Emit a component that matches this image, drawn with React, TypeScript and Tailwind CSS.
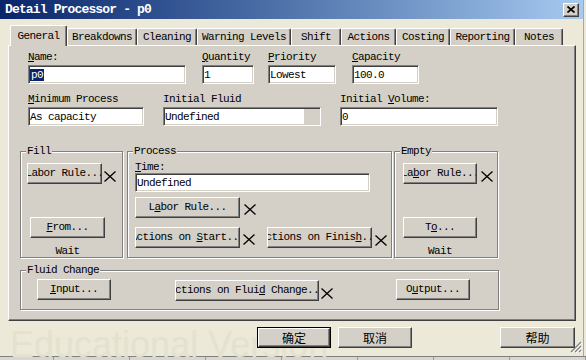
import { type FC, type ReactNode } from "react";

const MONO =
  "font-['Liberation_Mono','DejaVu_Sans_Mono',monospace] text-[11px] leading-[12px] tracking-[-0.6px] text-black";

const tabs = [
  { label: "General", w: "w-[57px]", active: true },
  { label: "Breakdowns", w: "w-[70px]" },
  { label: "Cleaning", w: "w-[60px]" },
  { label: "Warning Levels", w: "w-[94px]" },
  { label: "Shift", w: "w-[50px]" },
  { label: "Actions", w: "w-[55px]" },
  { label: "Costing", w: "w-[54px]" },
  { label: "Reporting", w: "w-[65px]" },
  { label: "Notes", w: "w-[48px]" },
];

const U: FC<{ children: ReactNode }> = ({ children }) => (
  <span className="underline underline-offset-[1px]">{children}</span>
);

const Cross: FC<{ className?: string }> = ({ className }) => (
  <svg width="12" height="11" viewBox="0 0 12 11" className={`shrink-0 ${className ?? ""}`}>
    <line x1="0.5" y1="0.5" x2="11.5" y2="10.5" stroke="#000" strokeWidth="1.3" />
    <line x1="11.5" y1="0.5" x2="0.5" y2="10.5" stroke="#000" strokeWidth="1.3" />
  </svg>
);

const Btn: FC<{ w: string; children: ReactNode; className?: string }> = ({
  w,
  children,
  className,
}) => (
  <div
    className={`${w} ${className ?? ""} h-[21px] shrink-0 flex items-center justify-center pb-[2px] overflow-hidden bg-[#d4d0c8] border border-t-white border-l-white border-r-[#404040] border-b-[#404040] shadow-[inset_-1px_-1px_0_#808080]`}
  >
    <span className="shrink-0 whitespace-pre">{children}</span>
  </div>
);

const Input: FC<{ w: string; children?: ReactNode; combo?: boolean }> = ({
  w,
  children,
  combo,
}) => (
  <div
    className={`${w} h-[19px] shrink-0 bg-white flex items-center overflow-hidden whitespace-nowrap border border-t-[#808080] border-l-[#808080] border-r-white border-b-white shadow-[inset_1px_1px_0_#404040,inset_-1px_-1px_0_#d4d0c8]`}
  >
    <div className="flex-1 pl-[1px]">{children}</div>
    {combo && <div className="w-[15px] h-[15px] mr-[1px] bg-[#d4d0c8]" />}
  </div>
);

const Field: FC<{ label: ReactNode; className?: string; children: ReactNode }> = ({
  label,
  className,
  children,
}) => (
  <div className={`flex flex-col ${className ?? ""}`}>
    <div className="h-[12px] whitespace-nowrap">{label}</div>
    <div className="mt-[2px]">{children}</div>
  </div>
);

const Group: FC<{ label: string; className: string; children: ReactNode }> = ({
  label,
  className,
  children,
}) => (
  <div
    className={`relative shrink-0 border border-[#808080] shadow-[inset_1px_1px_0_#fff,1px_1px_0_#fff] ${className}`}
  >
    <span className="absolute -top-[7px] left-[5px] px-[1px] bg-[#d4d0c8] whitespace-nowrap">
      {label}
    </span>
    {children}
  </div>
);

const CnBtn: FC<{ children: ReactNode; w: string; className?: string; def?: boolean }> = ({
  children,
  w,
  className,
  def,
}) => (
  <div className={`${w} ${className ?? ""} h-[21px] shrink-0 ${def ? "border border-black" : ""}`}>
    <div className="w-full h-full flex items-center justify-center bg-[#d4d0c8] border border-t-white border-l-white border-r-[#404040] border-b-[#404040] shadow-[inset_-1px_-1px_0_#808080] font-['Noto_Sans_CJK_SC',sans-serif] text-[12px] tracking-normal">
      {children}
    </div>
  </div>
);

export default function App() {
  return (
    <div className={`w-[586px] h-[360px] overflow-hidden bg-[#ece9d8] flex flex-col ${MONO}`}>
      <div className="flex h-[356px]">
        <div className="relative w-[583px] flex flex-col">
          {/* title bar */}
          <div className="h-[19px] shrink-0 flex items-center bg-linear-to-r from-[#0a246a] to-[#a6caf0] pl-[5px] pr-[4px]">
            <span className="font-bold text-white text-[13px] leading-[15px] tracking-[-0.85px]">
              Detail Processor - p0
            </span>
            <div className="ml-auto w-[16px] h-[14px] flex items-center justify-center bg-[#d4d0c8] border border-t-white border-l-white border-r-[#404040] border-b-[#404040] shadow-[inset_-1px_-1px_0_#808080]">
              <svg width="8" height="7" viewBox="0 0 8 7">
                <path d="M0.5 0.5 L7.5 6.5 M7.5 0.5 L0.5 6.5" stroke="#000" strokeWidth="1.7" />
              </svg>
            </div>
          </div>

          {/* tabs */}
          <div className="mt-[6px] h-[20px] shrink-0 flex items-end pl-[10px]">
            {tabs.map((t) =>
              t.active ? (
                <div
                  key={t.label}
                  className={`${t.w} relative z-10 h-[21px] -mb-[1px] flex justify-center pt-[4px] bg-[#d4d0c8] border-t border-l border-r border-t-white border-l-white border-r-[#404040] rounded-t-[2px] shadow-[inset_-1px_0_0_#808080]`}
                >
                  {t.label}
                </div>
              ) : (
                <div
                  key={t.label}
                  className={`${t.w} h-[17px] flex items-center justify-center bg-[#d4d0c8] border-t border-l border-r border-t-white border-l-white border-r-[#404040] rounded-t-[2px] shadow-[inset_-1px_0_0_#808080]`}
                >
                  {t.label}
                </div>
              ),
            )}
          </div>

          {/* panel */}
          <div className="ml-[8px] w-[568px] h-[276px] shrink-0 bg-[#d4d0c8] border border-t-white border-l-white border-r-[#404040] border-b-[#404040] shadow-[inset_-1px_-1px_0_#808080] pl-[11px] pt-[5px] flex flex-col">
            <div className="flex pl-[8px]">
              <Field label={<><U>N</U>ame:</>}>
                <Input w="w-[158px]">
                  <span className="bg-[#0a246a] text-white px-[1px]">p0</span>
                </Input>
              </Field>
              <Field className="ml-[16px]" label={<><U>Q</U>uantity</>}>
                <Input w="w-[52px]">1</Input>
              </Field>
              <Field className="ml-[14px]" label={<><U>P</U>riority</>}>
                <Input w="w-[68px]">Lowest</Input>
              </Field>
              <Field className="ml-[16px]" label={<><U>C</U>apacity</>}>
                <Input w="w-[67px]">100.0</Input>
              </Field>
            </div>

            <div className="flex pl-[8px] mt-[9px]">
              <Field label={<><U>M</U>inimum Process</>}>
                <Input w="w-[116px]">As capacity</Input>
              </Field>
              <Field className="ml-[19px]" label="Initial Fluid">
                <Input w="w-[158px]" combo>
                  Undefined
                </Input>
              </Field>
              <Field className="ml-[19px]" label={<>Initial <U>V</U>olume:</>}>
                <Input w="w-[158px]">0</Input>
              </Field>
            </div>

            <div className="flex mt-[25px] h-[107px]">
              <Group label="Fill" className="w-[103px] h-full pl-[6px] pt-[11px]">
                <div className="flex items-start">
                  <Btn w="w-[75px]">Labor Rule...</Btn>
                  <Cross className="ml-[2px] mt-[8px]" />
                </div>
                <div className="ml-[3px] w-[75px] mt-[33px] flex flex-col items-center">
                  <Btn w="w-[75px]">
                    <U>F</U>rom...
                  </Btn>
                  <div className="mt-[7px]">Wait</div>
                </div>
              </Group>

              <Group label="Process" className="w-[265px] h-full ml-[4px] pl-[7px] pt-[9px]">
                <div className="h-[12px]">
                  <U>T</U>ime:
                </div>
                <Input w="w-[235px]">Undefined</Input>
                <div className="flex items-start mt-[5px]">
                  <Btn w="w-[105px]">
                    L<U>a</U>bor Rule...
                  </Btn>
                  <Cross className="ml-[4px] mt-[7px]" />
                </div>
                <div className="flex items-start mt-[9px]">
                  <Btn w="w-[105px]">
                    {"Actions on "}
                    <U>S</U>
                    {"tart..."}
                  </Btn>
                  <Cross className="ml-[3px] mt-[7px]" />
                  <Btn w="w-[105px]" className="ml-[12px]">
                    {"Actions on Finis"}
                    <U>h</U>
                    {"..."}
                  </Btn>
                  <Cross className="ml-[3px] mt-[8px]" />
                </div>
              </Group>

              <Group label="Empty" className="w-[104px] h-full ml-[2px] pl-[8px] pt-[11px]">
                <div className="flex items-start">
                  <Btn w="w-[74px]">
                    La<U>b</U>or Rule...
                  </Btn>
                  <Cross className="ml-[4px] mt-[8px]" />
                </div>
                <div className="w-[74px] mt-[33px] flex flex-col items-center">
                  <Btn w="w-[74px]">
                    T<U>o</U>...
                  </Btn>
                  <div className="mt-[7px]">Wait</div>
                </div>
              </Group>
            </div>

            <Group label="Fluid Change" className="w-[479px] h-[40px] mt-[12px] pl-[16px] pt-[8px] flex items-start">
              <Btn w="w-[74px]">
                <U>I</U>nput...
              </Btn>
              <Btn w="w-[144px]" className="ml-[64px] mt-[1px]">
                {"Actions on Flui"}
                <U>d</U>
                {" Change..."}
              </Btn>
              <Cross className="ml-[2px] mt-[9px]" />
              <Btn w="w-[74px]" className="ml-[63px]">
                O<U>u</U>tput...
              </Btn>
            </Group>
          </div>

          {/* watermark */}
          <div className="absolute left-[10px] top-[327px] font-['Liberation_Sans',sans-serif] text-[36px] leading-none tracking-normal text-[#e4e1cf] whitespace-nowrap pointer-events-none">
            Educational Version
          </div>

          {/* dialog buttons */}
          <div className="relative mt-[6px] h-[21px] flex">
            <CnBtn def w="w-[74px]" className="ml-[257px]">
              确定
            </CnBtn>
            <CnBtn w="w-[74px]" className="ml-[7px]">
              取消
            </CnBtn>
            <CnBtn w="w-[75px]" className="ml-[88px]">
              帮助
            </CnBtn>
          </div>

          <svg
            width="12"
            height="12"
            viewBox="0 0 12 12"
            className="absolute right-[1px] bottom-[3px]"
          >
            <path d="M11 1 L1 11 M11 5 L5 11 M11 9 L9 11" stroke="#808080" strokeWidth="1.2" />
            <path d="M12 2 L2 12 M12 6 L6 12 M12 10 L10 12" stroke="#fff" strokeWidth="1" />
          </svg>
        </div>
        <div className="w-[3px] border-l border-[#aca899]" />
      </div>

      {/* strip of the window behind */}
      <div className="h-[4px] shrink-0 border-t border-[#808080] bg-[#d8d6d0] flex">
        <div className="w-[65px] border-r border-[#9a9a9a]" />
        {[0, 1, 2, 3, 4, 5, 6].map((i) => (
          <div key={i} className="w-[76px] shrink-0 border-r border-[#9a9a9a]" />
        ))}
      </div>
    </div>
  );
}
